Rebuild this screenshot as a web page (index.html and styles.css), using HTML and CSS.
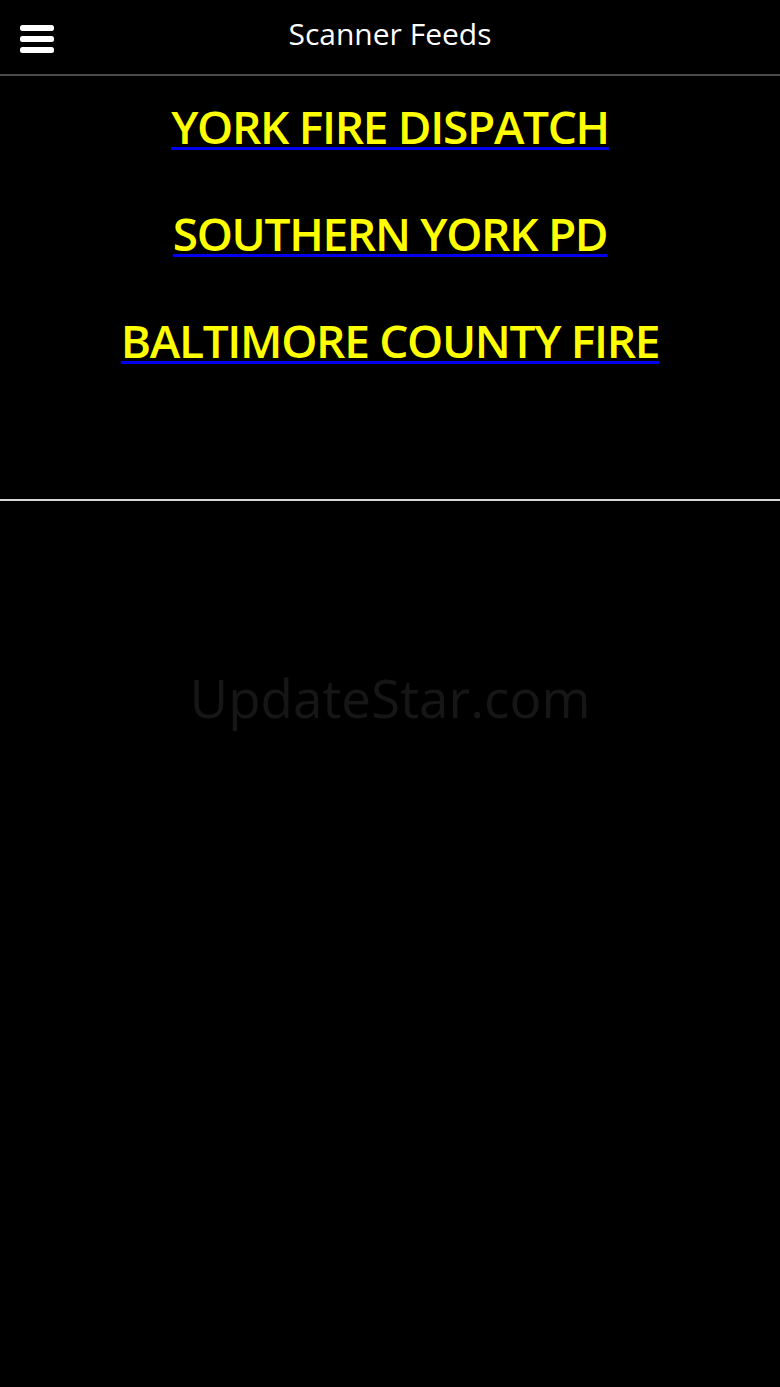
FILE: index.html
```html
<!DOCTYPE html>
<html lang="en">
<head>
  <meta charset="UTF-8">
  <title>Scanner Feeds</title>
  <meta name="viewport" content="width=device-width, initial-scale=1.0">
  <link rel="stylesheet" href="styles.css">
</head>
<body>
  <div class="header">
    <button class="menu-btn" aria-label="Menu">
      <svg width="34" height="28" viewBox="0 0 34 28">
        <rect x="0" y="0" width="34" height="6" rx="2.5" fill="#fff"/>
        <rect x="0" y="11" width="34" height="6" rx="2.5" fill="#fff"/>
        <rect x="0" y="22" width="34" height="6" rx="2.5" fill="#fff"/>
      </svg>
    </button>
    <div class="title">Scanner Feeds</div>
  </div>
  <div class="feeds">
    <a class="feed" href="#"><span>YORK FIRE DISPATCH</span></a>
    <a class="feed" href="#"><span>SOUTHERN YORK PD</span></a>
    <a class="feed" href="#"><span>BALTIMORE COUNTY FIRE</span></a>
  </div>
  <hr class="divider">
  <div class="watermark">UpdateStar.com</div>
</body>
</html>
```

FILE: styles.css
```css
body {
  background: #000;
  margin: 0;
  padding: 0;
  color: #fff;
  font-family: 'Open Sans', 'Noto Sans', Arial, sans-serif;
}
.header {
  position: relative;
  height: 74px;
  border-bottom: 2px solid #4a4a4a;
  display: flex;
  align-items: center;
  justify-content: center;
}
.menu-btn {
  position: absolute;
  left: 20px;
  top: 25px;
  background: none;
  border: none;
  padding: 0;
  line-height: 0;
}
.title {
  font-size: 30px;
  margin-top: -7px;
}
.feeds {
  display: flex;
  flex-direction: column;
  align-items: center;
  margin-top: -3px;
  height: 426px;
  box-sizing: border-box;
}
.feed {
  color: #0000ee;
  font-size: 46px;
  font-weight: 600;
  letter-spacing: -1.3px;
  line-height: 107px;
  text-decoration: underline;
  text-decoration-thickness: 3px;
  text-underline-offset: 3px;
}
.feed span {
  color: #ffff00;
}
.divider {
  margin: 0;
  border: none;
  border-top: 2px solid #d8d8d8;
}
.watermark {
  text-align: center;
  color: #161616;
  font-size: 53px;
  margin-top: 160px;
}
```
